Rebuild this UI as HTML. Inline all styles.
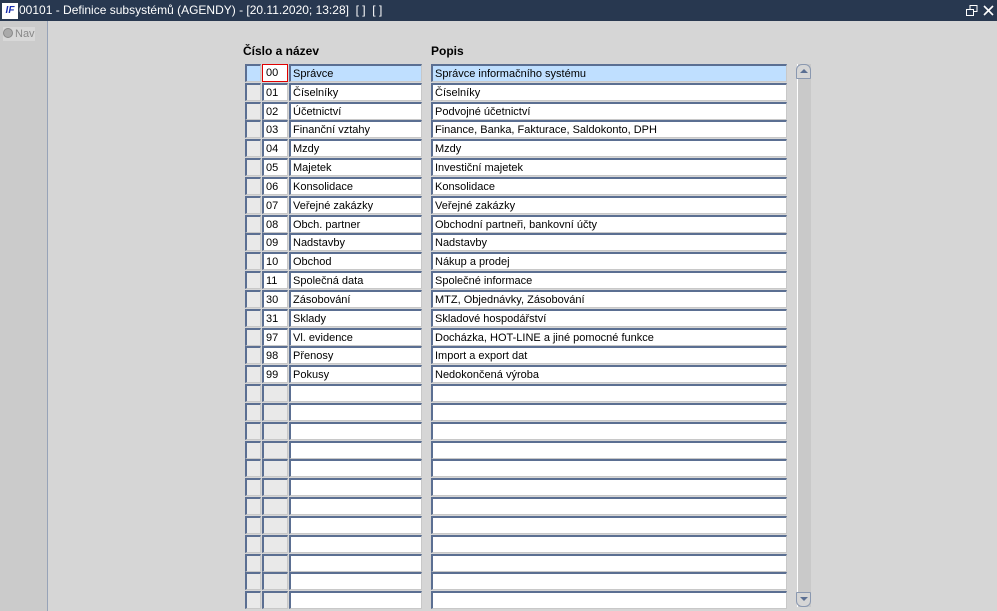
<html><head><style>
body{margin:0;width:997px;height:611px;background:#d6d6d6;font-family:"Liberation Sans",Arial,sans-serif;position:relative;overflow:hidden}
.t{position:absolute;left:0;top:0;width:997px;height:21px;background:#283850;color:#fff;font-size:12px;line-height:21px}
.lp{position:absolute;left:0;top:21px;width:47px;height:590px;background:#cbcbcb;border-right:1px solid #97a3b8}
.f{position:absolute;height:15px;box-sizing:border-box;border-top:2px solid #5b6f92;border-left:2px solid #5b6f92;border-right:1px solid #c8c8c8;border-bottom:1px solid #c8c8c8;background:#fff;font-size:11px;line-height:16px;padding-left:2px;white-space:nowrap;overflow:hidden;color:#000}
.g{background:#e9e9e9}
.s{background:#bfdfff}
.h{position:absolute;top:44px;font-size:12px;font-weight:bold}
</style></head><body>
<div class="t"><span style="position:absolute;left:2px;top:3px;width:14px;height:14px;background:#fff;border:1px solid #fff;color:#1a2fb0;font-weight:bold;font-style:italic;font-size:10px;line-height:14px;text-align:center">IF</span><span style="position:absolute;left:19px">00101 - Definice subsystémů (AGENDY) - [20.11.2020; 13:28] &nbsp;[ ] &nbsp;[ ]</span>
<svg style="position:absolute;left:966px;top:5px" width="12" height="11"><rect x="4" y="0.5" width="7" height="6" fill="none" stroke="#fff"/><rect x="0.5" y="4.5" width="7" height="6" fill="#283850" stroke="#fff"/></svg>
<svg style="position:absolute;left:983px;top:5px" width="11" height="11"><path d="M1 1L10 10M10 1L1 10" stroke="#fff" stroke-width="1.6"/></svg></div>
<div class="lp"><div style="position:absolute;left:3px;top:6px;width:32px;height:14px;background:#d8d8d8;font-size:11px;color:#888;line-height:14px"><span style="display:inline-block;width:8px;height:8px;border-radius:50%;background:#aaa;border:1px solid #888;vertical-align:-1px;margin-right:2px"></span>Nav</div></div>
<div class="h" style="left:243px">Číslo a název</div>
<div class="h" style="left:431px">Popis</div>
<div id="rows"></div>
<div style="position:absolute;left:797px;top:64px;width:13px;height:543px;background:#c9c9c9;border-left:1px solid #fff"></div>
<div style="position:absolute;left:796px;top:64px;width:13px;height:13px;border:1px solid #8a98b0;border-radius:6px 6px 1px 1px;background:#d6d6d6"><div style="position:absolute;left:3px;top:4px;border-left:4px solid transparent;border-right:4px solid transparent;border-bottom:4px solid #5b6f92"></div></div>
<div style="position:absolute;left:796px;top:592px;width:13px;height:13px;border:1px solid #8a98b0;border-radius:1px 1px 6px 6px;background:#d6d6d6"><div style="position:absolute;left:3px;top:4px;border-left:4px solid transparent;border-right:4px solid transparent;border-top:4px solid #5b6f92"></div></div>
<script>
var d=[["00","Správce","Správce informačního systému"],["01","Číselníky","Číselníky"],["02","Účetnictví","Podvojné účetnictví"],["03","Finanční vztahy","Finance, Banka, Fakturace, Saldokonto, DPH"],["04","Mzdy","Mzdy"],["05","Majetek","Investiční majetek"],["06","Konsolidace","Konsolidace"],["07","Veřejné zakázky","Veřejné zakázky"],["08","Obch. partner","Obchodní partneři, bankovní účty"],["09","Nadstavby","Nadstavby"],["10","Obchod","Nákup a prodej"],["11","Společná data","Společné informace"],["30","Zásobování","MTZ, Objednávky, Zásobování"],["31","Sklady","Skladové hospodářství"],["97","Vl. evidence","Docházka, HOT-LINE a jiné pomocné funkce"],["98","Přenosy","Import a export dat"],["99","Pokusy","Nedokončená výroba"]];
var h="";
for(var i=0;i<29;i++){var y=Math.round(64+i*18.83);var r=d[i]||["","",""];var s=i==0?" s":"";
h+='<div class="f g'+s+'" style="left:245px;top:'+y+'px;width:16px;height:18px"></div>';
h+='<div class="f '+(r[0]?"":"g")+'" style="left:262px;top:'+y+'px;width:26px;height:18px;'+(i==0?'border:1px solid #e00000;padding-left:3px;line-height:17px;':'')+'">'+r[0]+'</div>';
h+='<div class="f'+s+'" style="left:289px;top:'+y+'px;width:133px;height:18px">'+r[1]+'</div>';
h+='<div class="f'+s+'" style="left:431px;top:'+y+'px;width:356px;height:18px">'+r[2]+'</div>';}
document.getElementById("rows").innerHTML=h;
</script>
</body></html>
